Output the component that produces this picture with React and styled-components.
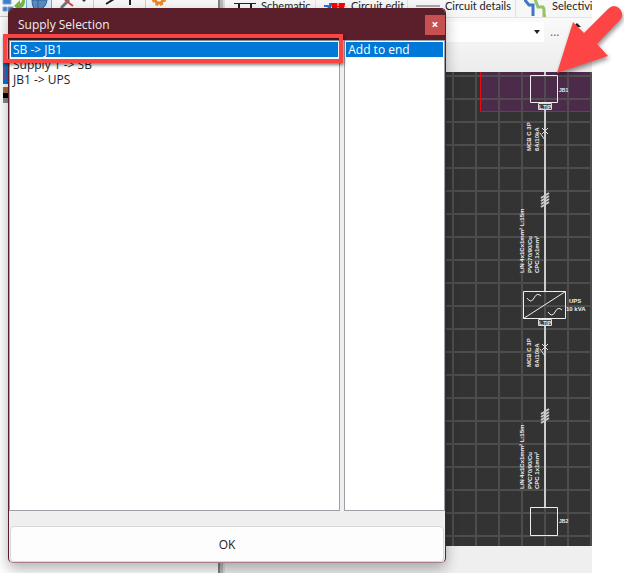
import styled, { createGlobalStyle } from 'styled-components';

const GlobalStyle = createGlobalStyle`
  * { box-sizing: border-box; }
  body {
    margin: 0;
    background: #fff;
    color: #222;
    font: 12px/15px "Open Sans", "Noto Sans", sans-serif;
  }
`;

const Desktop = styled.div`
  position: relative;
  min-height: 100vh;
  padding-right: 32px;
  display: flex;
  overflow: hidden;
`;

const SidePane = styled.section`
  width: 218px;
  flex: none;
  background: #fff;
`;

const Toolbar = styled.div`
  height: 17px;
  background: #f7f7f7;
  border-bottom: 1px solid #c8c8c8;
  overflow: hidden;
`;

const Tree = styled.svg`
  display: block;
  width: 40px;
  height: 90px;
`;

const Splitter = styled.div`
  width: 7px;
  flex: none;
  background: #b8b8b8;
  border-left: 2px solid #808080;
  border-right: 2px solid #dcdcdc;
`;

const MainPane = styled.main`
  flex: 1;
  min-width: 0;
  background: #efefef;
`;

const Tabs = styled.nav`
  height: 18px;
  display: flex;
  align-items: flex-end;
  overflow: hidden;
  background: #f7f7f7;
  border-bottom: 1px solid #e4e4e4;
`;

const Tab = styled.a`
  display: flex;
  flex: none;
  align-items: flex-end;
  gap: 4px;
  width: ${props => props.$width}px;
  padding: 0 0 4px 8px;
  border-right: 1px solid #e2e2e2;
  color: #222;
  font: 11px/15px Lato, "Open Sans", sans-serif;
  text-decoration: none;
  white-space: nowrap;

  svg {
    flex: none;
    margin-bottom: -4px;
  }
`;

const OptionsBar = styled.div`
  height: 54px;
  padding-top: 4px;
  background: linear-gradient(#fafafa, #ececec);
  display: flex;
  align-items: flex-start;
  gap: 6px;
`;

const ComboBox = styled.div`
  display: flex;
  align-items: center;
  justify-content: flex-end;
  width: 319px;
  height: 20px;
  background: #fff;
`;

const Combo = styled.select`
  appearance: none;
  flex: 1;
  height: 20px;
  border: 0;
  background: #fff;
`;

const ComboArrow = styled.svg`
  width: 6px;
  height: 4px;
  margin-right: 4px;
`;

const MoreButton = styled.button`
  border: 0;
  padding: 0;
  background: none;
  color: #666;
  font: inherit;
  line-height: 20px;
`;

const UpIcon = styled.svg`
  width: 8px;
  height: 8px;
  margin-left: 8px;
`;

const Canvas = styled.svg`
  display: block;
  width: 100%;
  height: 474px;
  background: #333;
  font: bold 6px "Liberation Sans", sans-serif;
`;

const Dialog = styled.section`
  position: absolute;
  top: 8px;
  left: 8px;
  width: 438px;
  border: 1px solid #5a1f2a;
  border-bottom-color: #a98088;
  border-radius: 5px;
  background: #efefef;
  box-shadow: 0 6px 14px rgba(0, 0, 0, 0.3);
  overflow: hidden;
`;

const TitleBar = styled.header`
  display: flex;
  justify-content: space-between;
  align-items: center;
  height: 31px;
  padding-left: 9px;
  background: #5a1f2a;
`;

const Title = styled.h1`
  margin: 0;
  color: #eee;
  font-size: 12px;
  font-weight: 400;
`;

const CloseButton = styled.button`
  width: 20px;
  height: 20px;
  padding: 0;
  border: 0;
  background: #c75050;
  color: #fff;
  font: bold 12px/20px "Open Sans", sans-serif;
`;

const Lists = styled.div`
  display: flex;
  gap: 4px;
`;

const List = styled.ul`
  flex: ${props => props.$grow};
  height: 471px;
  margin: 0;
  padding: 1px;
  border: 1px solid #a0a0a8;
  background: #fff;
  list-style: none;
`;

const Row = styled.li`
  padding-left: 2px;
  background: ${props => (props.$selected ? '#0078d7' : 'transparent')};
  color: ${props => (props.$selected ? '#fff' : '#222')};
`;

const OkButton = styled.button`
  display: block;
  width: calc(100% - 2px);
  height: 36px;
  margin: 15px 1px 0;
  border: 1px solid #d8d8d8;
  border-radius: 4px;
  background: #fdfdfd;
  color: #222;
  font: inherit;
`;

const Highlight = styled.div`
  position: absolute;
  top: 34px;
  left: 3px;
  width: 340px;
  height: 29px;
  border: 4px solid #fa4343;
  box-shadow: 1px 2px 3px rgba(0, 0, 0, 0.5), inset 1px 2px 3px rgba(0, 0, 0, 0.4);
`;

const Pointer = styled.svg`
  position: absolute;
  top: 0;
  right: 0;
  width: 76px;
  height: 82px;
  filter: drop-shadow(1px 3px 2px rgba(0, 0, 0, 0.4));
`;

const ToolIcons = () => (
  <svg width="218" height="16" aria-hidden="true">
    <path d="M3 -2h8v6H3zM3 7h4v4H3zM8 7h5v4H8z" fill="#3f7fc8" stroke="#7aa8d8" />
    <path d="M14 6l6-6v3q2 0 2-4h3v3q-1 6-5 6v3z" fill="#7ab648" />
    <path d="M26.500 -1h25v16h-25z" fill="#d9ebfa" stroke="#6aaee0" />
    <path d="M32 0q0 8 5 12l4-3q5-2 6-9z" fill="#5d8cc0" stroke="#2f5f98" />
    <path d="M38 0v9" stroke="#2f5f98" />
    <path d="M61 8L69 0" stroke="#6b7884" strokeWidth="3" />
    <path d="M65 0l8 6" stroke="#d04848" strokeWidth="2" />
    <path d="M82 0l2 2 2-2z" fill="#333" />
    <path d="M93.500 0v8M145.500 0v8" stroke="#ccc" />
    <path d="M106 4l8-5M130 0v5" stroke="#222" strokeWidth="2" />
    <circle cx="159" cy="-1" r="4" fill="none" stroke="#ee8420" strokeWidth="3" />
    <circle cx="159" cy="-1" r="6" fill="none" stroke="#ee8420" strokeWidth="2" strokeDasharray="3 2" />
  </svg>
);

const SchematicIcon = () => (
  <svg width="24" height="14" aria-hidden="true">
    <path d="M1 0h22M6 0v6M18 0v6M3 6h6M15 6h6" stroke="#222" strokeWidth="2" />
  </svg>
);

const CircuitEditIcon = () => (
  <svg width="23" height="14" aria-hidden="true">
    <path d="M0 3h4l2 5V0" fill="none" stroke="#2f6fd0" strokeWidth="2" />
    <circle cx="14" cy="1" r="7" fill="#f00" />
    <path d="M14 0v3M14 4v2" stroke="#fff" />
  </svg>
);

const DetailsIcon = () => (
  <svg width="25" height="14" aria-hidden="true">
    <path d="M0 -1h24M0 3h24M0 7h24" stroke="#aaa" strokeWidth="2" />
  </svg>
);

const SelectivityIcon = () => (
  <svg width="24" height="18" aria-hidden="true">
    <path d="M0 0l5 6h4v11" fill="none" stroke="#3f77c8" strokeWidth="3" />
    <path d="M11 0l3 8h5l1 2v7h2" fill="none" stroke="#94c464" strokeWidth="3" />
  </svg>
);

const Breaker = ({ y }) => (
  <g transform={`translate(320 ${y})`}>
    <path d="M-3 -3l6 6M3 -3l-6 6M-5 2l5 7" stroke="#ddd" fill="none" />
    <text transform="translate(-14 20) rotate(-90)">MCB C 3P</text>
    <text transform="translate(-6 20) rotate(-90)">6A/10kA</text>
  </g>
);

const Cable = ({ y }) => (
  <g transform={`translate(320 ${y})`}>
    <path d="M-4 -2l8-5M-4 1l8-5M-4 4l8-5M-4 7l8-5" stroke="#ccc" strokeWidth="2" />
    <text transform="translate(-21 73) rotate(-90)">L/N 4x1Cx1mm² L:15m</text>
    <text transform="translate(-13 73) rotate(-90)">PVC70/90/Cu</text>
    <text transform="translate(-6 73) rotate(-90)">CPC 1x1mm²</text>
  </g>
);

const Terminal = ({ y }) => (
  <g transform={`translate(313 ${y})`}>
    <path d="M.5 .5h13v6H.5z" fill="#444" stroke="#ddd" />
    <text x="7" y="6" textAnchor="middle" fontSize="5">L.TIP</text>
  </g>
);

const Schematic = () => (
  <Canvas role="img" aria-label="Schematic" fill="#eee">
    <defs>
      <pattern id="grid" width="23" height="23" patternUnits="userSpaceOnUse" x="20" y="3">
        <path d="M0 1h23M1 0v23" stroke="#505050" strokeWidth="2" />
      </pattern>
    </defs>
    <path d="M255 0h120v39H255z" fill="#4c2b4a" />
    <rect width="100%" height="100%" fill="url(#grid)" opacity="0.9" />
    <path d="M255.500 0v39.500H376" fill="none" stroke="#e80c0c" />
    <path d="M320 0v4M320 38v181M320 254v181" stroke="#ccc" strokeWidth="2" />
    <path d="M305.500 3.500h27v27h-27zM305.500 435.500h27v28h-27zM298.500 219.500h42v27h-42zM298.500 246.500l42-27" fill="none" stroke="#eee" />
    <path d="M302 226q4 6 7 0t7-2M323 240q4 6 7 0t7-2" fill="none" stroke="#eee" />
    <text x="334" y="20" fontSize="5">JB1</text>
    <text x="344" y="231">UPS</text>
    <text x="341" y="239" fontSize="6">10 kVA</text>
    <text x="334" y="451" fontSize="5">JB2</text>
    <Terminal y={31} />
    <Terminal y={247} />
    <Breaker y={59} />
    <Breaker y={275} />
    <Cable y={128} />
    <Cable y={344} />
  </Canvas>
);

const App = () => (
  <Desktop>
    <GlobalStyle />
    <SidePane>
      <Toolbar><ToolIcons /></Toolbar>
      <Tree aria-hidden="true">
        <path d="M3 45h8v22H3z" fill="#0078d7" />
        <path d="M8 51H5v11h3" fill="none" stroke="#d03060" />
        <path d="M3 70h7v6H3z" fill="#a07038" />
        <path d="M3 76h7v5H3z" />
        <path d="M3 81h7v5H3z" fill="#888" />
      </Tree>
    </SidePane>
    <Splitter />
    <MainPane>
      <Tabs>
        <Tab href="#schematic" $width={91}><SchematicIcon />Schematic</Tab>
        <Tab href="#edit" $width={92}><CircuitEditIcon />Circuit edit</Tab>
        <Tab href="#details" $width={108}><DetailsIcon />Circuit details</Tab>
        <Tab href="#selectivity" $width={108}><SelectivityIcon />Selectivity</Tab>
      </Tabs>
      <OptionsBar>
        <ComboBox>
          <Combo aria-label="Circuit" />
          <ComboArrow aria-hidden="true"><path d="M0 0h6L3 4z" fill="#222" /></ComboArrow>
        </ComboBox>
        <MoreButton>...</MoreButton>
        <UpIcon aria-hidden="true"><path d="M0 5l4-4 4 4z" fill="#222" /></UpIcon>
      </OptionsBar>
      <Schematic />
    </MainPane>
    <Dialog role="dialog" aria-labelledby="dialog-title">
      <TitleBar>
        <Title id="dialog-title">Supply Selection</Title>
        <CloseButton aria-label="Close">×</CloseButton>
      </TitleBar>
      <Lists>
        <List $grow="328 0 0">
          <Row $selected>SB -&gt; JB1</Row>
          <Row>Supply 1 -&gt; SB</Row>
          <Row>JB1 -&gt; UPS</Row>
        </List>
        <List $grow="97 0 0">
          <Row $selected>Add to end</Row>
        </List>
      </Lists>
      <OkButton>OK</OkButton>
    </Dialog>
    <Highlight />
    <Pointer viewBox="0 0 76 82" aria-hidden="true">
      <path d="M9 73L25 22L36 33L60 9Q66 3 72 9Q77 16 71 21L49 44L60 56Z" fill="#fd4545" />
    </Pointer>
  </Desktop>
);

export default App;
